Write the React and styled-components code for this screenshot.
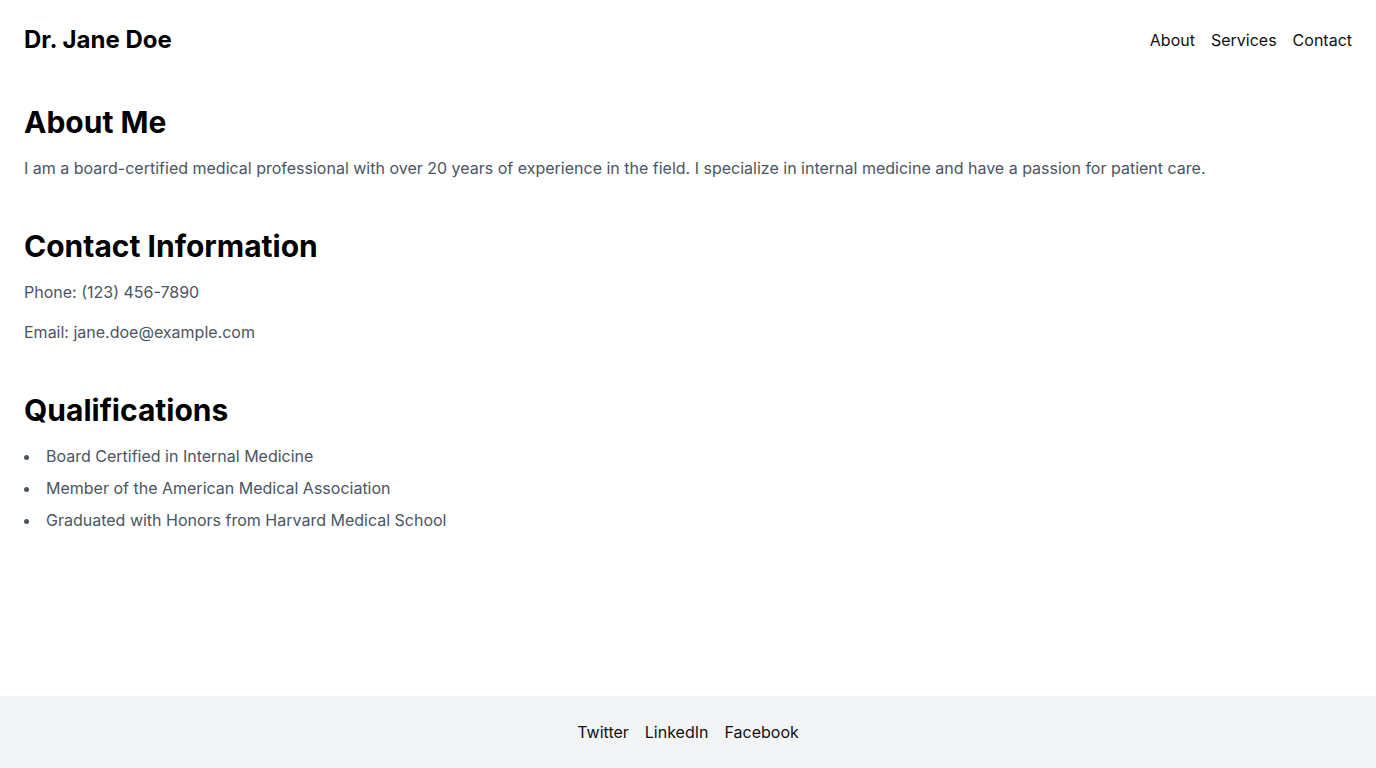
import React from 'react';
import styled, { createGlobalStyle } from 'styled-components';

const GlobalStyle = createGlobalStyle`
  * {
    box-sizing: border-box;
  }

  body {
    margin: 0;
    font-family: Inter, "Noto Sans", sans-serif;
    color: #000;
    background: #fff;
  }
`;

const Page = styled.div`
  min-height: 100vh;
  display: flex;
  flex-direction: column;
`;

const Header = styled.header`
  display: flex;
  align-items: center;
  justify-content: space-between;
  padding: 24px;
`;

const Brand = styled.h1`
  margin: 0;
  font-size: 24px;
  line-height: 32px;
  font-weight: 700;
`;

const LinkRow = styled.nav`
  display: flex;
  gap: 16px;
  justify-content: ${({ $center }) => ($center ? 'center' : 'flex-end')};
`;

const NavLink = styled.a`
  font-size: 16px;
  line-height: 24px;
  color: #111;
  text-decoration: none;
`;

const Main = styled.main`
  flex: 1;
  padding: 24px;
`;

const Section = styled.section`
  margin-bottom: 48px;

  &:last-child {
    margin-bottom: 0;
  }
`;

const SectionTitle = styled.h2`
  margin: 0 0 16px;
  font-size: 30px;
  line-height: 36px;
  font-weight: 700;
`;

const Text = styled.p`
  margin: 0 0 16px;
  font-size: 16px;
  line-height: 24px;
  color: #4b5563;

  &:last-child {
    margin-bottom: 0;
  }
`;

const List = styled.ul`
  margin: 0;
  padding: 0;
  list-style: disc inside;
  display: flex;
  flex-direction: column;
  gap: 8px;
`;

const Item = styled.li`
  font-size: 16px;
  line-height: 24px;
  color: #4b5563;
`;

const Footer = styled.footer`
  background: #f3f4f6;
  padding: 24px;
`;

const qualifications = [
  'Board Certified in Internal Medicine',
  'Member of the American Medical Association',
  'Graduated with Honors from Harvard Medical School',
];

const App = () => {
  return (
    <Page>
      <GlobalStyle />
      <Header>
        <Brand>Dr. Jane Doe</Brand>
        <LinkRow>
          <NavLink href="#about">About</NavLink>
          <NavLink href="#services">Services</NavLink>
          <NavLink href="#contact">Contact</NavLink>
        </LinkRow>
      </Header>

      <Main>
        <Section id="about">
          <SectionTitle>About Me</SectionTitle>
          <Text>
            I am a board-certified medical professional with over 20 years of experience in the field. I specialize in internal medicine and have a passion for patient care.
          </Text>
        </Section>

        <Section id="contact">
          <SectionTitle>Contact Information</SectionTitle>
          <Text>Phone: (123) 456-7890</Text>
          <Text>Email: jane.doe@example.com</Text>
        </Section>

        <Section id="services">
          <SectionTitle>Qualifications</SectionTitle>
          <List>
            {qualifications.map((q) => (
              <Item key={q}>{q}</Item>
            ))}
          </List>
        </Section>
      </Main>

      <Footer>
        <LinkRow $center>
          <NavLink href="#">Twitter</NavLink>
          <NavLink href="#">LinkedIn</NavLink>
          <NavLink href="#">Facebook</NavLink>
        </LinkRow>
      </Footer>
    </Page>
  );
};

export default App;
